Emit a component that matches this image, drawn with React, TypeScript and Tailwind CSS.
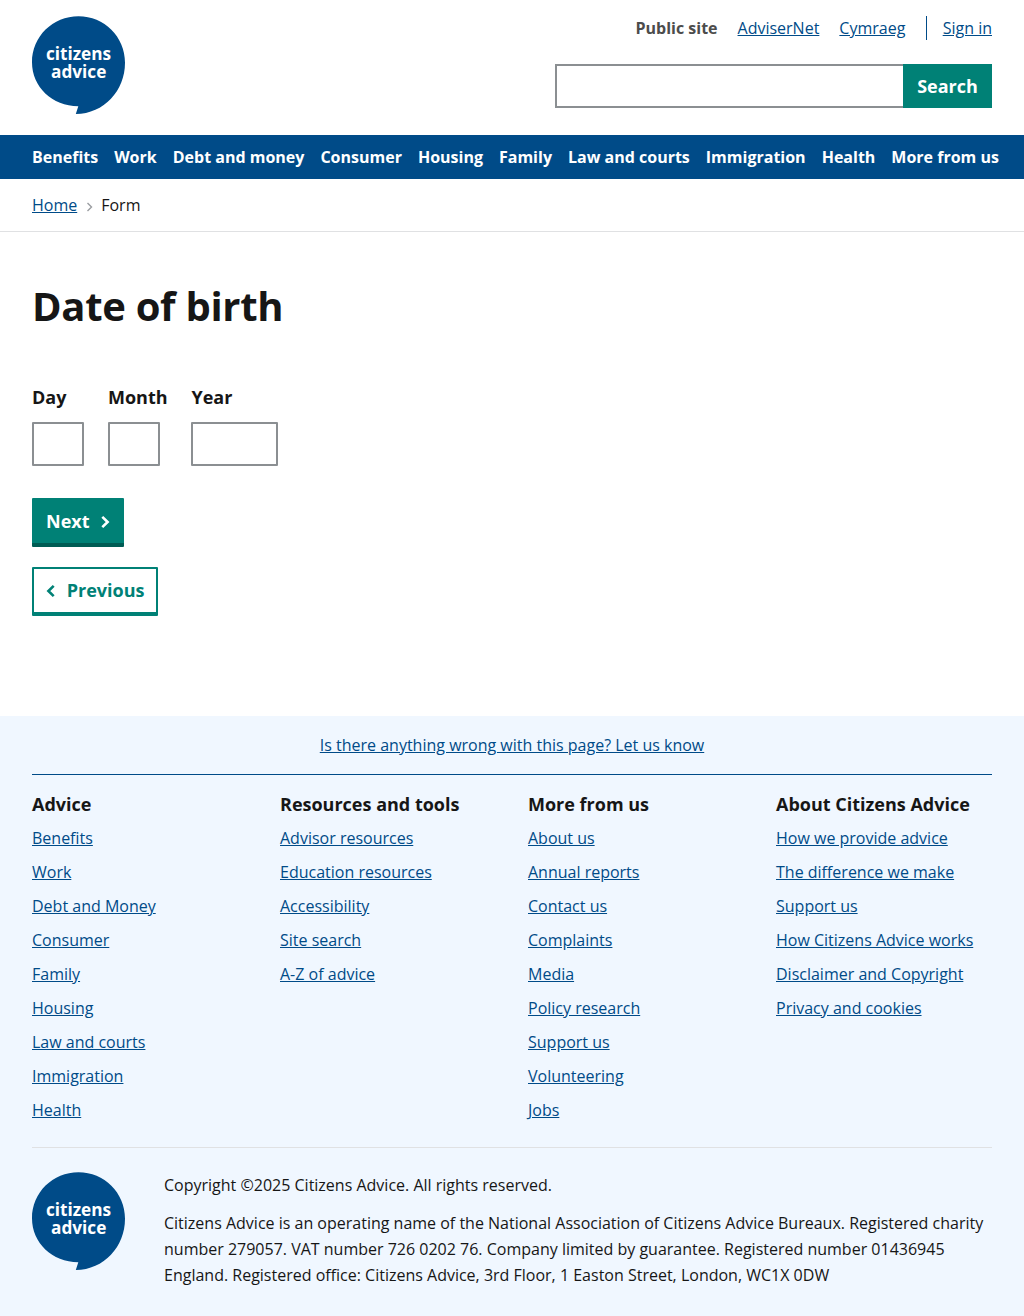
import React from "react";

const link = "text-[#004b88] underline";

function Logo() {
  return (
    <svg className="block shrink-0" width="93" height="98" viewBox="0 0 93 98" role="img" aria-label="Citizens Advice">
      <path
        fill="#004b88"
        d="M46.5 0.3C20.8 0.3 0 20.6 0 46.3C0 70.8 20.2 90.2 46.3 90.2L43.8 98C72 98 93 74.5 93 46.8C93 20.8 72.2 0.3 46.5 0.3Z"
      />
      <g fill="#fff" fontFamily="'Open Sans', sans-serif" fontWeight="700" fontSize="18.1">
        <text x="13.9" y="43.5" textLength="65.2" lengthAdjust="spacingAndGlyphs">citizens</text>
        <text x="19" y="61.5" textLength="55.3" lengthAdjust="spacingAndGlyphs">advice</text>
      </g>
    </svg>
  );
}

const nav = ["Benefits", "Work", "Debt and money", "Consumer", "Housing", "Family", "Law and courts", "Immigration", "Health", "More from us"];

const columns = [
  { title: "Advice", links: ["Benefits", "Work", "Debt and Money", "Consumer", "Family", "Housing", "Law and courts", "Immigration", "Health"] },
  { title: "Resources and tools", links: ["Advisor resources", "Education resources", "Accessibility", "Site search", "A-Z of advice"] },
  { title: "More from us", links: ["About us", "Annual reports", "Contact us", "Complaints", "Media", "Policy research", "Support us", "Volunteering", "Jobs"] },
  { title: "About Citizens Advice", links: ["How we provide advice", "The difference we make", "Support us", "How Citizens Advice works", "Disclaimer and Copyright", "Privacy and cookies"] },
];

const fields = [
  { label: "Day", width: "w-[52px]" },
  { label: "Month", width: "w-[52px]" },
  { label: "Year", width: "w-[87px]" },
];

export default function App() {
  return (
    <div className="min-h-[1316px] bg-white font-['Open_Sans',sans-serif] text-base text-[#161616]">
      <header className="flex h-[135px] justify-between px-8 pt-4">
        <a href="#" className="h-fit"><Logo /></a>
        <div className="flex flex-col items-end">
          <div className="flex h-6 items-center">
            <strong className="mr-5 text-[#4c4c4c]">Public site</strong>
            <a href="#" className={`mr-5 ${link}`}>AdviserNet</a>
            <a href="#" className={`mr-[20.3px] ${link}`}>Cymraeg</a>
            <span className="mr-4 h-6 w-px bg-[#004b88]" />
            <a href="#" className={link}>Sign in</a>
          </div>
          <form className="mt-6 flex h-11 w-[437px]">
            <input aria-label="Search" className="min-w-0 flex-1 border-2 border-r-0 border-[#8b8f92] px-2 outline-none" />
            <button type="button" className="w-[89px] bg-[#008176] text-lg font-bold text-white">Search</button>
          </form>
        </div>
      </header>
      <nav className="flex h-11 items-center gap-4 bg-[#004b88] px-8 font-bold whitespace-nowrap text-white">
        {nav.map((n) => <a href="#" key={n}>{n}</a>)}
      </nav>
      <div className="flex h-[53px] items-center border-b border-[#e0e1e3] px-8">
        <a href="#" className={link}>Home</a>
        <svg className="mt-1 mr-2 ml-[9px]" width="7" height="10" viewBox="0 0 7 10" fill="none" stroke="#9a9da0" strokeWidth="1.4">
          <path d="M1.5 1L5.5 5L1.5 9" />
        </svg>
        <span>Form</span>
      </div>
      <main className="h-[484px] px-8 pt-[45px]">
        <h1 className="text-[40px] leading-[57px] font-bold tracking-[-0.3px]">Date of birth</h1>
        <div className="mt-[50px] flex gap-6">
          {fields.map((f) => (
            <label key={f.label} className="flex flex-col text-lg leading-[27px] font-bold last:-ml-[0.2px]">
              {f.label}
              <input className={`mt-[11px] h-11 rounded-[1px] border-2 border-[#8b8f92] px-2 outline-none ${f.width}`} />
            </label>
          ))}
        </div>
        <div className="mt-8 flex flex-col items-start gap-5">
          <button className="flex h-[49px] w-[92px] items-center rounded-[1px] border-b-4 border-[#005c54] bg-[#008176] pl-[14px] text-lg font-bold text-white">
            Next
            <svg className="mt-[3px] ml-[11px]" width="9" height="12" viewBox="0 0 9 12" fill="none" stroke="currentColor" strokeWidth="2.6">
              <path d="M1.3 0.9L6.6 6L1.3 11.1" />
            </svg>
          </button>
          <button className="flex h-[49px] w-[126px] items-center rounded-[1px] border-2 border-b-4 border-[#008176] pb-[2px] pl-3 text-lg font-bold text-[#008176]">
            <svg className="mt-[3px] mr-[11.7px]" width="9" height="12" viewBox="0 0 9 12" fill="none" stroke="currentColor" strokeWidth="2.6">
              <path d="M7.7 0.9L2.4 6L7.7 11.1" />
            </svg>
            Previous
          </button>
        </div>
      </main>
      <footer className="h-[600px] bg-[#f0f7ff] px-8">
        <div className="flex h-[59px] items-center justify-center border-b border-[#004b88]">
          <a href="#" className={link}>Is there anything wrong with this page? Let us know</a>
        </div>
        <div className="grid h-[372px] grid-cols-4 gap-8 pt-4">
          {columns.map((c) => (
            <div key={c.title} className="whitespace-nowrap">
              <h2 className="text-lg leading-[27px] font-bold">{c.title}</h2>
              <ul className="mt-[7px] flex flex-col gap-2 leading-[26px]">
                {c.links.map((l) => <li key={l}><a href="#" className={link}>{l}</a></li>)}
              </ul>
            </div>
          ))}
        </div>
        <div className="flex gap-[39px] border-t border-[#e0e1e3] pt-6">
          <Logo />
          <div className="leading-[26px]">
            <p>Copyright ©2025 Citizens Advice. All rights reserved.</p>
            <p className="mt-3">Citizens Advice is an operating name of the National Association of Citizens Advice Bureaux. Registered charity number 279057. VAT number 726 0202 76. Company limited by guarantee. Registered number 01436945 England. Registered office: Citizens Advice, 3rd Floor, 1 Easton Street, London, WC1X 0DW</p>
          </div>
        </div>
      </footer>
    </div>
  );
}
